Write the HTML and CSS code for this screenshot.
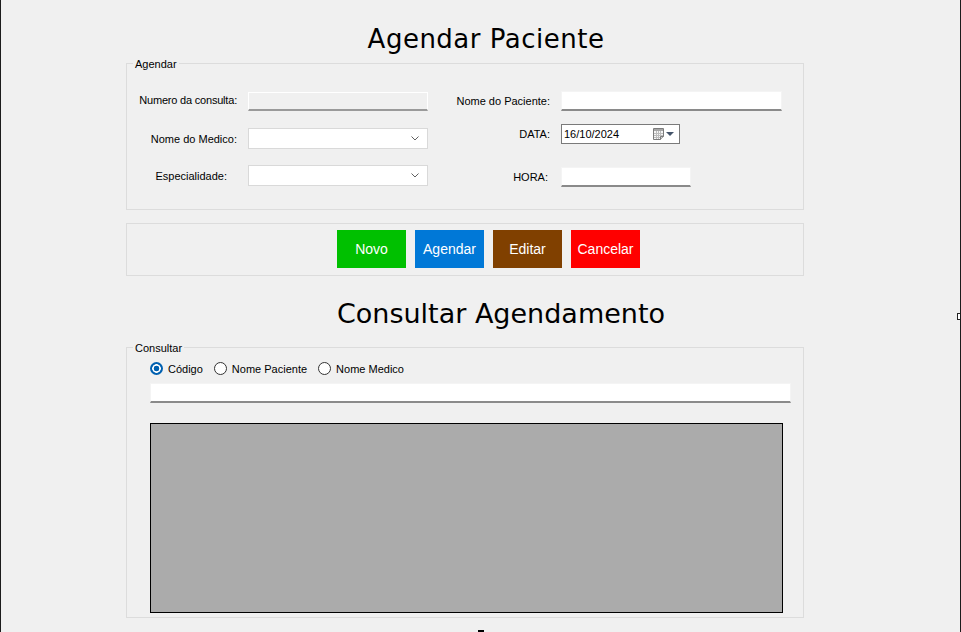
FILE: index.html
```html
<!DOCTYPE html>
<html lang="pt">
<head>
<meta charset="utf-8">
<title>Agendar Paciente</title>
<link rel="stylesheet" href="styles.css">
</head>
<body>
<div class="window">
  <div class="content">
    <h1 class="title title-1">Agendar Paciente</h1>

    <div class="group group-agendar">
      <div class="legend">Agendar</div>
      <div class="form-cols">
        <div class="col col-left">
          <div class="row row-l1">
            <span class="label label-up">Numero da consulta:</span>
            <div class="textbox disabled w180 h19"></div>
          </div>
          <div class="row row-l2">
            <span class="label">Nome do Medico:</span>
            <div class="combo w180">
              <svg class="chev" width="8" height="5" viewBox="0 0 8 5"><polyline points="0.5,0.5 4,4 7.5,0.5" fill="none" stroke="#606060" stroke-width="1"/></svg>
            </div>
          </div>
          <div class="row row-l3">
            <span class="label label-short">Especialidade:</span>
            <div class="combo w180">
              <svg class="chev" width="8" height="5" viewBox="0 0 8 5"><polyline points="0.5,0.5 4,4 7.5,0.5" fill="none" stroke="#606060" stroke-width="1"/></svg>
            </div>
          </div>
        </div>
        <div class="col col-right">
          <div class="row row-r1">
            <span class="label">Nome do Paciente:</span>
            <div class="textbox w221 h20"></div>
          </div>
          <div class="row row-r2">
            <span class="label">DATA:</span>
            <div class="datepicker">
              <span class="date-text">16/10/2024</span>
              <span class="date-icons">
                <svg width="11" height="12" viewBox="0 0 11 12">
                  <path d="M0.5 0.5 H10.5 V8.5 L7.5 11.5 H0.5 Z" fill="#f6f6f6" stroke="#7c7c7c"/>
                  <rect x="1" y="1" width="9" height="2" fill="#a6a6a6"/>
                  <path d="M3.5 3 V11 M5.5 3 V11 M7.5 3 V10 M1 5.5 H10 M1 7.5 H10 M1 9.5 H8" stroke="#bdbdbd" stroke-width="1"/>
                  <path d="M7.5 11.5 V8.5 H10.5" fill="#d0d0d0" stroke="#7c7c7c"/>
                </svg>
                <svg width="8" height="4" viewBox="0 0 8 4"><polygon points="0,0 8,0 4,4" fill="#44546a"/></svg>
              </span>
            </div>
          </div>
          <div class="row row-r3">
            <span class="label label-hora">HORA:</span>
            <div class="textbox w130 h20"></div>
          </div>
        </div>
      </div>
    </div>

    <div class="group group-buttons">
      <button class="btn btn-novo">Novo</button>
      <button class="btn btn-agendar">Agendar</button>
      <button class="btn btn-editar">Editar</button>
      <button class="btn btn-cancelar">Cancelar</button>
    </div>

    <h2 class="title title-2">Consultar Agendamento</h2>

    <div class="group group-consultar">
      <div class="legend">Consultar</div>
      <div class="radios">
        <label class="radio"><span class="radio-dot checked"></span>Código</label>
        <label class="radio"><span class="radio-dot"></span>Nome Paciente</label>
        <label class="radio"><span class="radio-dot"></span>Nome Medico</label>
      </div>
      <div class="textbox search"></div>
      <div class="grid"></div>
    </div>
  </div>
  <span class="handle handle-right"></span>
  <span class="handle handle-bottom"></span>
</div>
</body>
</html>
```
FILE: styles.css
```css
* { box-sizing: border-box; }
html, body { margin: 0; padding: 0; }
body {
  background: #f0f0f0;
  font-family: "Liberation Sans", Arial, sans-serif;
  font-size: 11px;
  color: #000;
}
.window {
  position: relative;
  width: 961px;
  height: 632px;
  border-left: 1px solid #1c1c1c;
  border-right: 1px solid #1c1c1c;
  overflow: hidden;
}
.content {
  width: 678px;
  margin-left: 125px;
  display: flex;
  flex-direction: column;
}
.title {
  margin: 0;
  font-family: "DejaVu Sans", sans-serif;
  font-weight: normal;
  text-align: center;
  width: 400px;
  color: #000;
  white-space: nowrap;
}
.title-1 {
  margin-top: 24px;
  margin-left: 160px;
  font-size: 26px;
  line-height: 30px;
  height: 30px;
  letter-spacing: 0.5px;
}
.title-2 {
  margin-top: 22px;
  margin-left: 175px;
  font-size: 27px;
  line-height: 32px;
  height: 32px;
}
.group {
  border: 1px solid #dcdcdc;
  display: flex;
  flex-direction: column;
}
.legend {
  align-self: flex-start;
  margin: -7px 0 0 6px;
  padding: 0 2px;
  line-height: 14px;
  height: 14px;
  background: #f0f0f0;
}
.group-agendar { margin-top: 9px; height: 147px; }
.form-cols { display: flex; gap: 12px; }
.col { display: flex; flex-direction: column; }
.col-left { width: 301px; margin-top: 21px; }
.col-right { margin-top: 20px; }
.row { display: flex; align-items: center; gap: 11px; }
.label { width: 110px; text-align: right; white-space: nowrap; }
.label-up { margin-bottom: 4px; letter-spacing: -0.2px; }
.label-short { padding-right: 10px; }
.label-hora { padding-right: 2px; }
.row-l2 { margin-top: 17px; }
.row-l3 { margin-top: 16px; }
.row-r2 { margin-top: 13px; }
.row-r3 { margin-top: 23px; }

.textbox {
  background: #fff;
  border: 1px solid #f4f4f4;
  border-bottom: 2px solid #8a8a8a;
}
.textbox.disabled {
  background: #f0f0f0;
  border: 1px solid #fff;
  border-bottom: 2px solid #9a9a9a;
}
.w180 { width: 180px; }
.w221 { width: 221px; }
.w130 { width: 130px; }
.h19 { height: 19px; }
.h20 { height: 20px; }
.combo {
  height: 21px;
  background: #fff;
  border: 1px solid #d9d9d9;
  display: flex;
  align-items: center;
  justify-content: flex-end;
  padding-right: 8px;
}
.chev { display: block; }
.datepicker {
  width: 119px;
  height: 20px;
  background: #fff;
  border: 1px solid #7a7a7a;
  display: flex;
  align-items: center;
  justify-content: space-between;
  padding: 0 5px 0 2px;
}
.date-text { line-height: 14px; }
.date-icons { display: flex; align-items: center; gap: 2px; }
.date-icons svg { display: block; }

.group-buttons {
  margin-top: 13px;
  height: 53px;
  flex-direction: row;
  padding: 6px 0 0 210px;
  gap: 9px;
}
.btn {
  width: 69px;
  height: 38px;
  border: none;
  padding: 0;
  margin: 0;
  color: #fff;
  font-family: "Liberation Sans", Arial, sans-serif;
  font-size: 14px;
}
.btn-novo { background: #00c000; }
.btn-agendar { background: #0078d7; }
.btn-editar { background: #804000; }
.btn-cancelar { background: #ff0000; }

.group-consultar { margin-top: 17px; height: 271px; }
.radios {
  display: flex;
  gap: 11px;
  margin: 5px 0 0 23px;
  height: 17px;
  align-items: center;
}
.radio { display: flex; align-items: center; gap: 5px; white-space: nowrap; }
.radio-dot {
  width: 13px;
  height: 13px;
  border-radius: 50%;
  border: 1px solid #333;
  background: #fff;
}
.radio-dot.checked {
  border: none;
  background: radial-gradient(circle at center, #0060b0 0 2.6px, #fff 3.1px 4px, #0060b0 4.6px);
}
.search {
  width: 641px;
  height: 20px;
  margin: 6px 0 0 23px;
}
.grid {
  width: 633px;
  height: 190px;
  margin: 20px 0 0 23px;
  border: 1px solid #000;
  background: #ababab;
}
.handle { position: absolute; display: block; }
.handle-right {
  left: 956px;
  top: 313px;
  width: 7px;
  height: 7px;
  background: #fff;
  border: 1px solid #222;
}
.handle-bottom {
  left: 477px;
  top: 630px;
  width: 6px;
  height: 2px;
  background: #000;
}
```
